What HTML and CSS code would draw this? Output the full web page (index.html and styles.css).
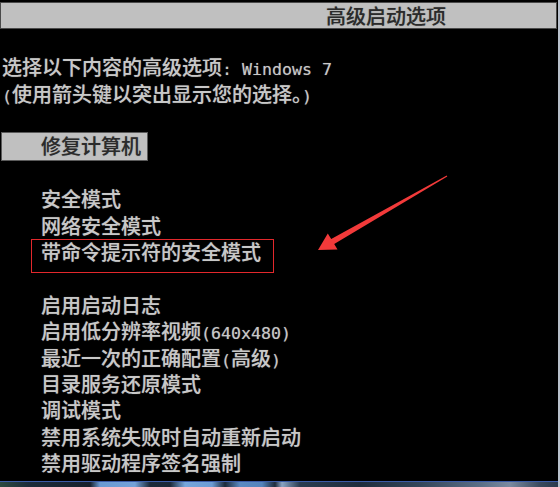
FILE: index.html
```html
<!DOCTYPE html>
<html lang="zh-CN">
<head>
<meta charset="utf-8">
<title>高级启动选项</title>
<link rel="stylesheet" href="styles.css">
</head>
<body>
<div class="screen">
  <div class="titlebar">高级启动选项</div>
  <div class="content">
    <div class="line">选择以下内容的高级选项<span class="en">: Windows 7</span></div>
    <div class="line"><span class="en">(</span>使用箭头键以突出显示您的选择。<span class="en">)</span></div>
    <div class="line blank"></div>
    <div class="line item selected">修复计算机</div>
    <div class="line blank"></div>
    <div class="line item">安全模式</div>
    <div class="line item">网络安全模式</div>
    <div class="line item marked">带命令提示符的安全模式</div>
    <div class="line blank"></div>
    <div class="line item">启用启动日志</div>
    <div class="line item">启用低分辨率视频<span class="en">(640x480)</span></div>
    <div class="line item">最近一次的正确配置<span class="en">(</span>高级<span class="en">)</span></div>
    <div class="line item">目录服务还原模式</div>
    <div class="line item">调试模式</div>
    <div class="line item">禁用系统失败时自动重新启动</div>
    <div class="line item">禁用驱动程序签名强制</div>
  </div>
  <div class="taskbar"></div>
  <svg class="arrow" width="560" height="487" viewBox="0 0 560 487" aria-hidden="true">
    <polygon points="318,250 337.5,249.5 334.2,244.1 447.3,176.5 446.7,175.5 331.2,238.9 327.8,233.5" fill="#f23a3a"/>
  </svg>
</div>
</body>
</html>
```

FILE: styles.css
```css
html, body {
  margin: 0;
  padding: 0;
  background: #000;
}

.screen {
  position: relative;
  width: 558px;
  height: 487px;
  border-right: 2px solid #b9c1cd;
  background: #000;
  display: flex;
  flex-direction: column;
  overflow: hidden;
  font-family: "Noto Sans CJK SC", "Noto Sans", sans-serif;
  font-size: 20px;
  font-weight: 500;
  color: #c8c8c8;
  text-shadow: 0 0 1px rgba(190, 190, 190, 0.55);
}

.titlebar {
  margin-top: 2px;
  height: 25px;
  margin-right: 1px;
  background: #c0c0c0;
  border: 1px solid #4a4a4a;
  color: #2b2b2b;
  text-shadow: 0 0 1px rgba(60, 60, 60, 0.5);
  line-height: 25px;
  padding-left: 325px;
  white-space: nowrap;
}

.content {
  margin-top: 25.3px;
  padding-left: 2px;
  display: flex;
  flex-direction: column;
}

.line {
  height: 26.4px;
  line-height: 26.4px;
  white-space: nowrap;
}

.en {
  font-family: "DejaVu Sans Mono", "Liberation Mono", monospace;
  font-size: 16.6px;
  line-height: 1;
  white-space: pre;
}

.item {
  padding-left: 39px;
}

.selected {
  width: 106px;
  background: #c0c0c0;
  color: #2b2b2b;
  text-shadow: 0 0 1px rgba(60, 60, 60, 0.5);
  box-shadow: 0 0 0 1px #5a5a5a;
}

.marked {
  position: relative;
}

.marked::after {
  content: "";
  position: absolute;
  left: 29px;
  top: 0;
  box-sizing: border-box;
  width: 243px;
  height: 34px;
  border: 1.5px solid #e2282c;
}

.taskbar {
  margin-top: auto;
  height: 5px;
  border-top: 1px solid #3a5aa8;
  background: linear-gradient(90deg,
    #2c4a40 0px, #1c2c3a 28px, #16202c 90px,
    #6a9ad2 100px, #74a2d8 135px, #1c2a3a 150px,
    #1a2838 170px, #76a6dc 185px, #6c9cd4 212px, #1c2a3a 225px,
    #5a8ac2 240px, #5484bc 262px, #1e2c3c 275px,
    #8aa4c4 282px, #2a3c50 300px, #1e2c3c 360px,
    #34465a 420px, #5a6e86 480px, #7a8aa0 510px, #3a4a5e 540px, #2a3a4c 558px);
}

.arrow {
  position: absolute;
  left: 0;
  top: 0;
  pointer-events: none;
}
```
